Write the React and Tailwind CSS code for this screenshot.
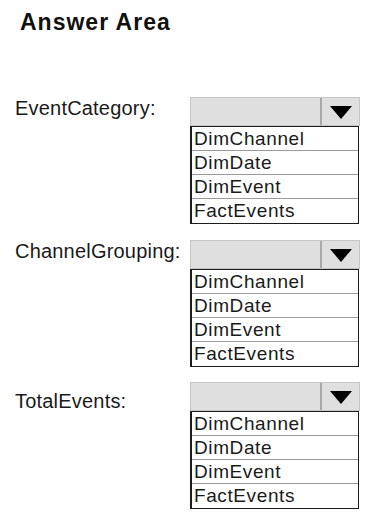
import React from 'react'

const options = ['DimChannel', 'DimDate', 'DimEvent', 'FactEvents']

function Dropdown() {
  return (
    <div className="w-[170px]">
      {/* closed select */}
      <div className="flex h-[29px] border border-[#c6c6c6] bg-[#dfdfdf]">
        <div className="flex-1" />
        <div className="flex w-[39px] items-center justify-center border-l-2 border-[#a9a9a9] pt-[2px]">
          <svg width="22" height="13" viewBox="0 0 22 13">
            <polygon points="0,0 22,0 11,13" fill="#000" />
          </svg>
        </div>
      </div>
      {/* options list */}
      <div className="w-[169px] border border-l-2 border-[#1c1c1c] bg-white">
        {options.map((o, i) => (
          <div
            key={o}
            className={`h-[24px] pl-[2px] text-[19px] leading-[23px] tracking-[0.6px] text-[#1a1a1a] ${
              i < options.length - 1 ? 'border-b border-[#9a9a9a]' : ''
            }`}
          >
            {o}
          </div>
        ))}
      </div>
    </div>
  )
}

function Row({ label, labelPad }) {
  return (
    <div className="flex">
      <div className={`w-[190px] pl-[15px] text-[20px] leading-[22px] tracking-[0.2px] text-[#1a1a1a] ${labelPad}`}>
        {label}
      </div>
      <Dropdown />
    </div>
  )
}

function App() {
  return (
    <div
      className="h-[519px] w-[373px] overflow-hidden bg-white"
      style={{ fontFamily: '"Liberation Sans", Arial, sans-serif' }}
    >
      <div className="pl-5 pt-2">
        <h1 className="text-[23px] font-bold leading-[28px] tracking-[1px] text-[#111]">Answer Area</h1>
      </div>

      <div className="mt-[61px] flex flex-col">
        <Row label="EventCategory:" labelPad="" />
        <div className="mt-[16px]">
          <Row label="ChannelGrouping:" labelPad="" />
        </div>
        <div className="mt-[15px]">
          <Row label="TotalEvents:" labelPad="pt-2" />
        </div>
      </div>
    </div>
  )
}

export default App
